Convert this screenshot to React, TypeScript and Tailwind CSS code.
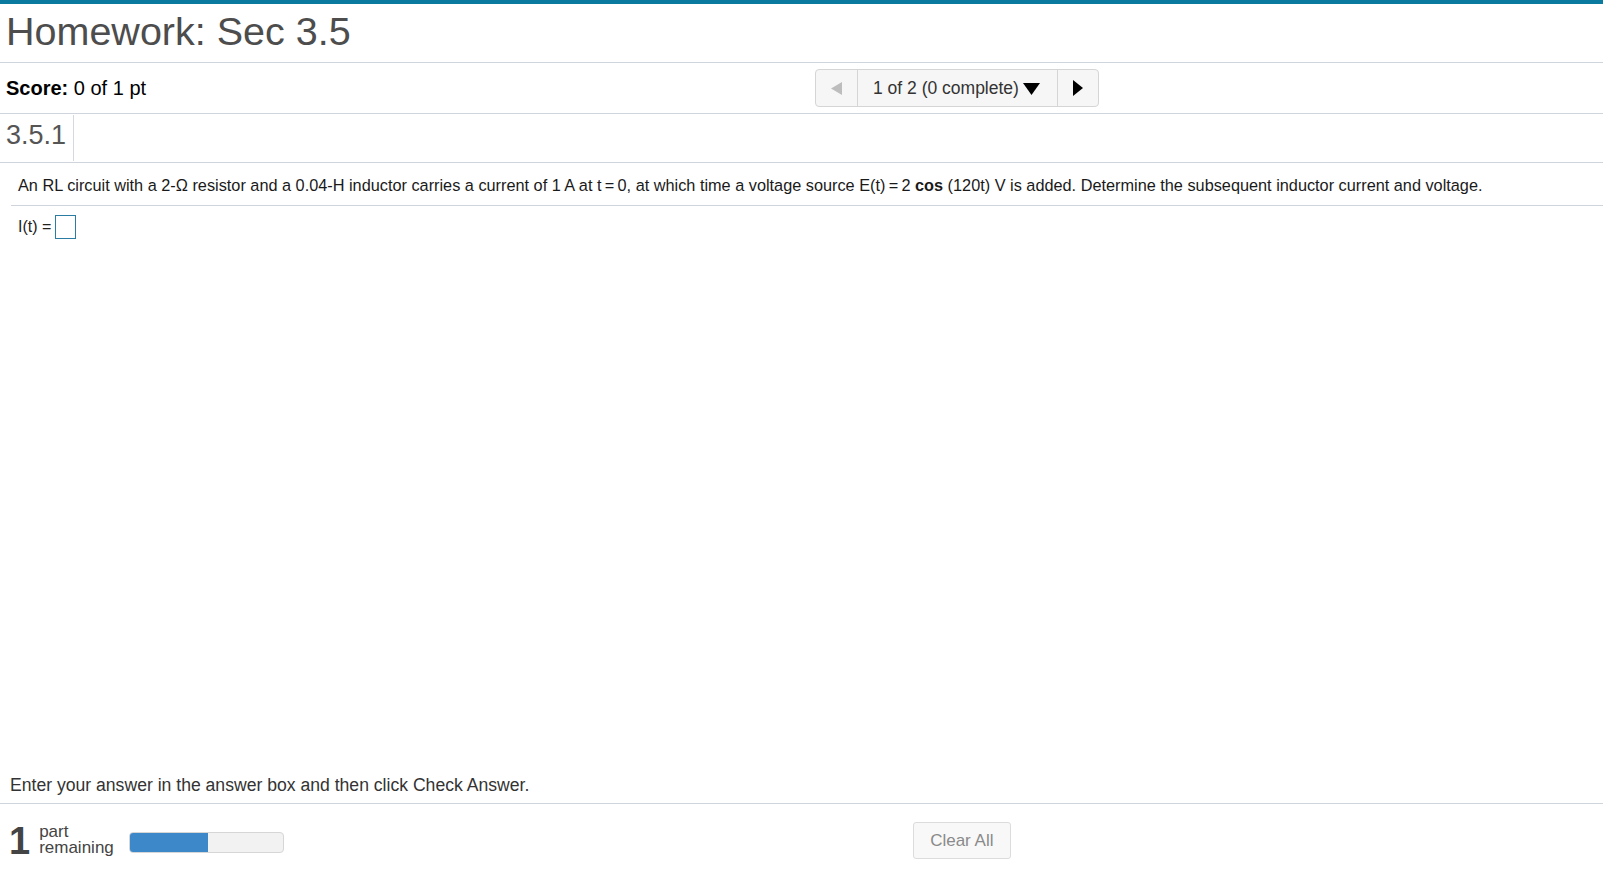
import React from "react";

function ArrowLeft() {
  return (
    <svg width="11" height="13" viewBox="0 0 11 13">
      <polygon points="11,0 11,13 0,6.5" fill="#bdbdbd" />
    </svg>
  );
}

function ArrowRight() {
  return (
    <svg width="10" height="16" viewBox="0 0 10 16">
      <polygon points="0,0 10,8 0,16" fill="#000" />
    </svg>
  );
}

function CaretDown() {
  return (
    <svg width="17" height="12" viewBox="0 0 17 12">
      <polygon points="0,0 17,0 8.5,12" fill="#000" />
    </svg>
  );
}

export default function App() {
  return (
    <div className="flex h-[875px] w-full flex-col bg-white font-['Liberation_Sans',Arial,sans-serif]">
      <div className="h-[4px] bg-[#0a7b9f]" />

      <header className="h-[59px] border-b border-[#cfd4dd] pl-[6px] pt-[7px]">
        <h1 className="text-[39.5px] leading-[40px] text-[#4d4d4d]">Homework: Sec 3.5</h1>
      </header>

      {/* score + question navigator */}
      <div className="flex h-[51px] items-center border-b border-[#cfd4dd]">
        <div className="w-[815px] pl-[6px] text-[20px] leading-[20px] text-black">
          <span className="font-bold">Score:</span> 0 of 1 pt
        </div>
        <div className="flex h-[38px] items-stretch rounded-[4px] border border-[#d5d5d5] bg-[#f6f6f6]">
          <button className="flex w-[42px] items-center justify-center border-r border-[#d5d5d5]">
            <ArrowLeft />
          </button>
          <button className="flex w-[199px] items-center pl-[15px] text-[17.5px] text-[#333]">
            1 of 2 (0 complete)
            <span className="ml-[4px] mt-[1px]">
              <CaretDown />
            </span>
          </button>
          <button className="flex w-[41px] items-center justify-center border-l border-[#d5d5d5]">
            <ArrowRight />
          </button>
        </div>
      </div>

      <div className="flex h-[49px] border-b border-[#cfd4dd]">
        <div className="my-[1px] w-[74px] border-r border-[#d5d8de] pl-[6px] pt-[7px] text-[27px] leading-[27px] text-[#555]">
          3.5.1
        </div>
      </div>

      <div className="ml-[11px] h-[43px] border-b border-[#cfd4dd] pl-[7px] pt-[12px] text-[16.3px] leading-[20px] text-[#1a1a1a]">
        An RL circuit with a 2-Ω resistor and a 0.04-H inductor carries a current of 1 A at t{"\u2009"}={"\u2009"}0, at which time a voltage
        source E(t){"\u2009"}={"\u2009"}2 <span className="font-bold">cos</span> (120t) V is added. Determine the subsequent inductor current and voltage.
      </div>

      <div className="flex items-center pl-[18px] pt-[9px] text-[16px] text-[#222]">
        <span>I(t) =</span>
        <span className="ml-[4px] h-[24px] w-[21px] border border-[#2a7ca3] bg-white" />
      </div>

      <div className="flex-1" />

      <div className="border-b border-[#cfd4dd] pb-[7px] pl-[10px] text-[17.6px] leading-[22px] text-[#333]">
        Enter your answer in the answer box and then click Check Answer.
      </div>

      <footer className="flex h-[71px] items-center pl-[9px]">
        <span className="mt-[3px] text-[38px] font-bold leading-[38px] text-[#444]">1</span>
        <div className="ml-[9px] flex flex-col text-[17px] leading-[16px] text-[#444]">
          <span>part</span>
          <span>remaining</span>
        </div>
        <div className="ml-[15px] mt-[5px] h-[21px] w-[155px] overflow-hidden rounded-[4px] border border-[#d6d6d6] bg-[#f2f2f2]">
          <div className="h-full w-[78px] bg-[#3d88c8]" />
        </div>
        <button className="ml-[629px] mt-[2px] h-[37px] w-[98px] rounded-[3px] border border-[#dcdcdc] bg-[#f8f8f8] text-[17px] text-[#8a8a8a]">
          Clear All
        </button>
      </footer>
    </div>
  );
}
